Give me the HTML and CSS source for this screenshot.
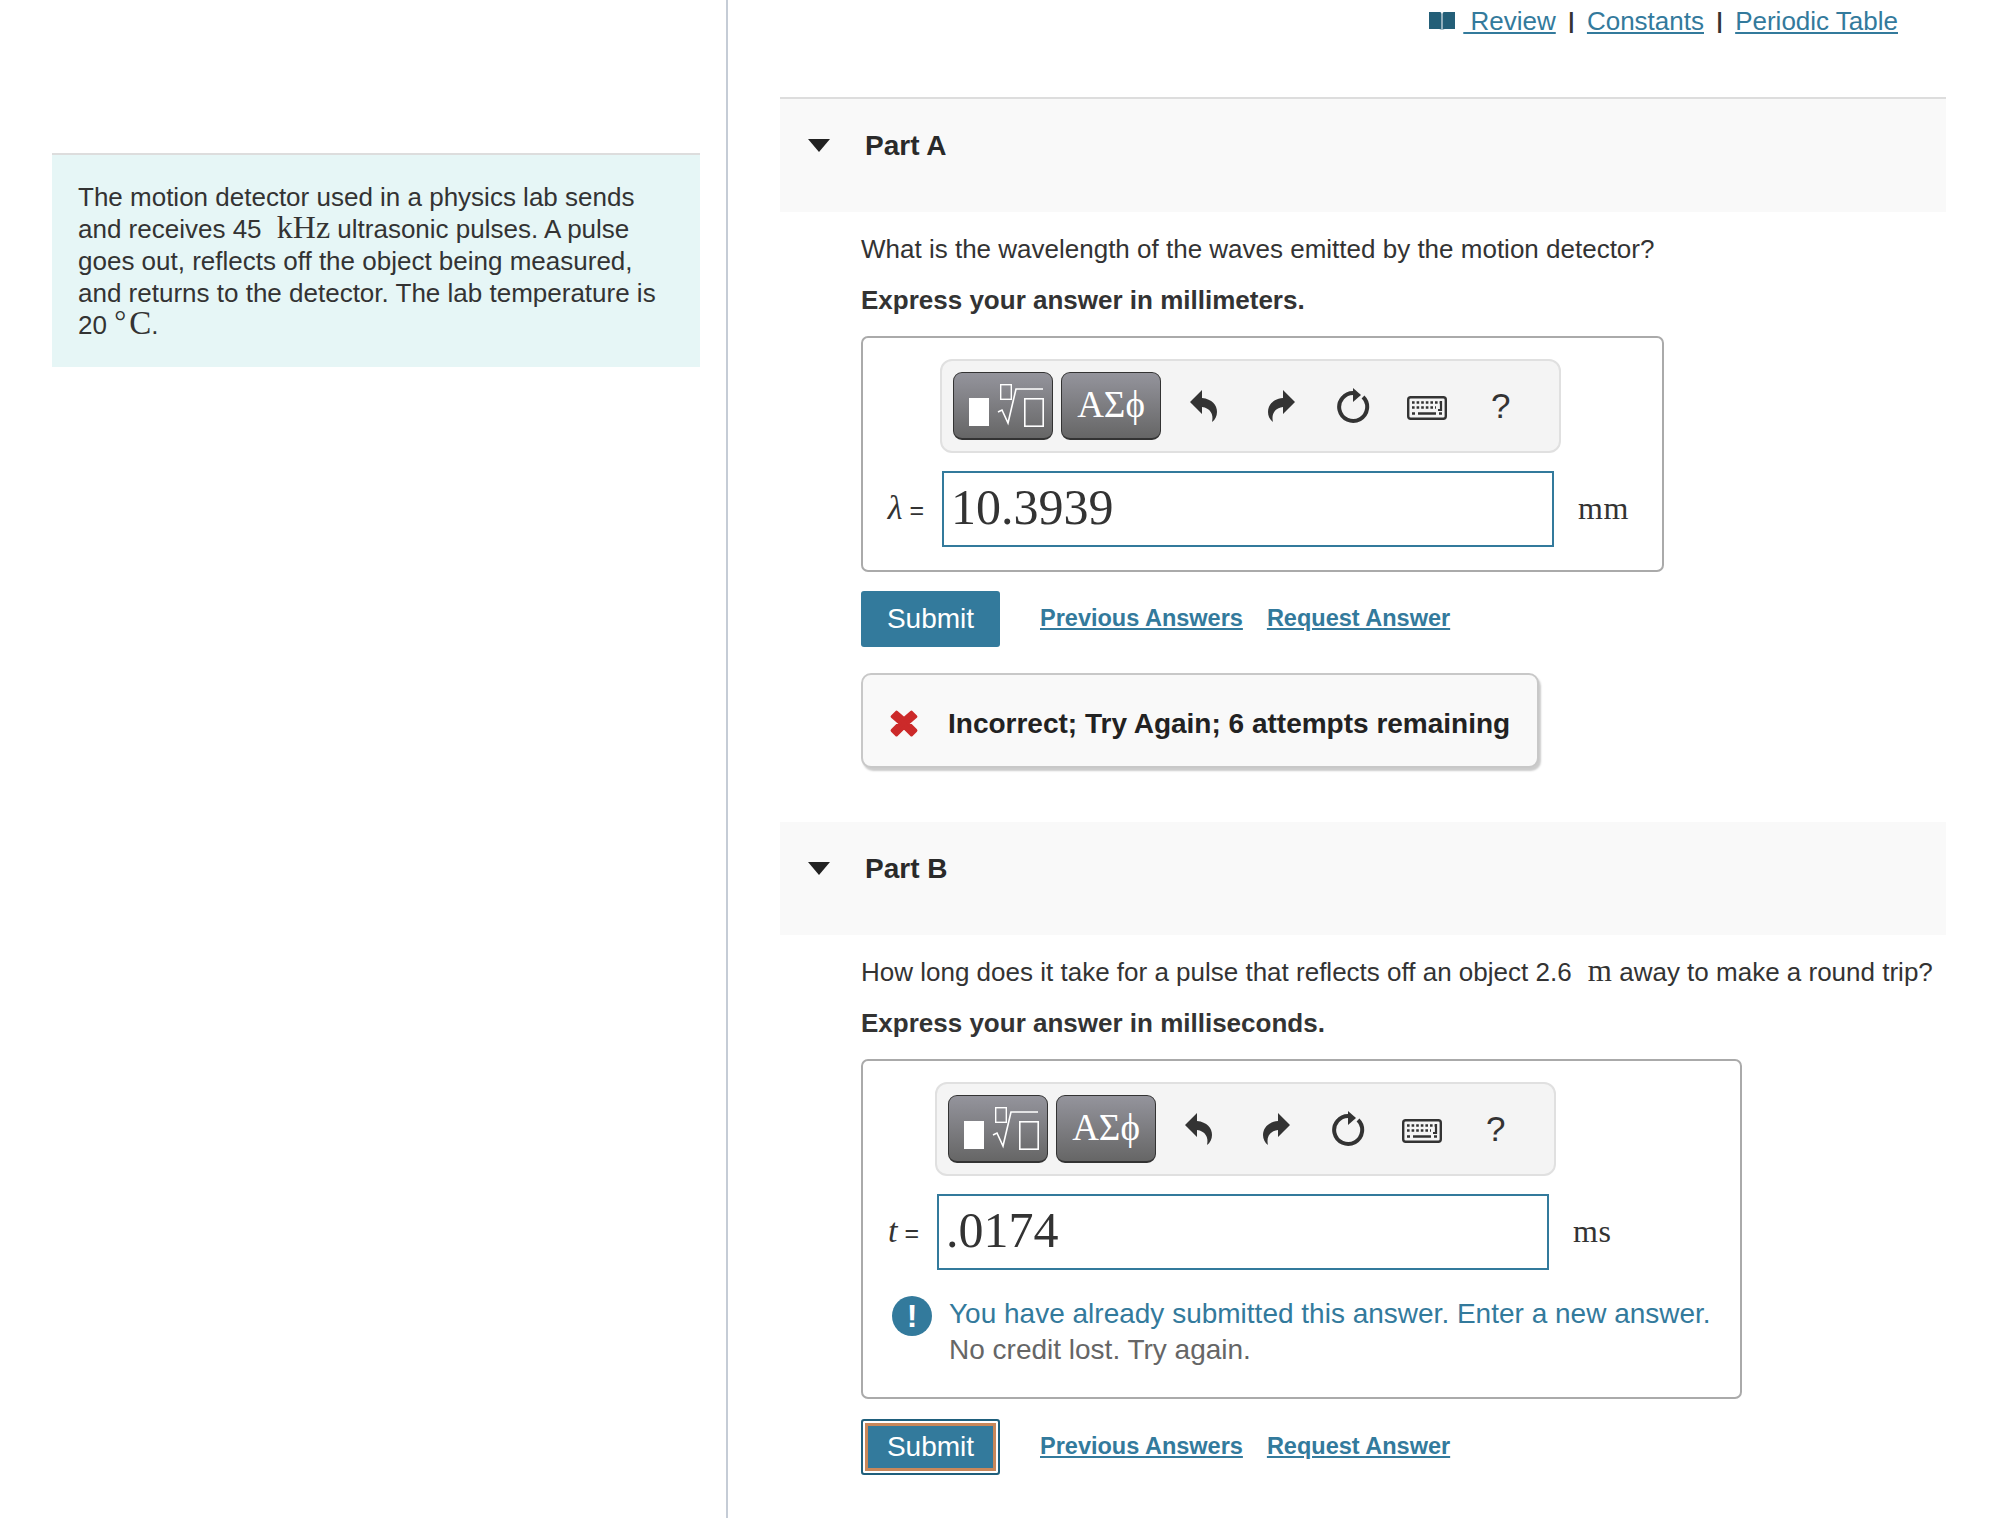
FILE: index.html
```html
<!DOCTYPE html>
<html lang="en">
<head>
  <meta charset="UTF-8" />
  <title>Motion detector problem</title>
  <link rel="stylesheet" href="styles.css">
</head>
<body>

  <svg class="defs" width="0" height="0">
    <symbol id="i-undo" viewBox="0 0 28 32"><path d="M0 12 L12 0 V8 C22 9 27 15 27 22 C27 26 25 30 22 32 C24 24 20 18 12 17 V24 Z"/></symbol>
    <symbol id="i-redo" viewBox="0 0 28 32"><path d="M28 12 L16 0 V8 C6 9 1 15 1 22 C1 26 3 30 6 32 C4 24 8 18 16 17 V24 Z"/></symbol>
    <symbol id="i-reset" viewBox="0 0 34 38">
      <path d="M18 6 A14 14 0 1 0 27 10" fill="none" stroke="#333" stroke-width="4"/>
      <path d="M17 1 L25 8 L17 15 Z"/>
    </symbol>
    <symbol id="i-keys" viewBox="0 0 40 24">
      <rect x="1.2" y="1.2" width="37.6" height="21.6" rx="2.5" fill="none" stroke="#333" stroke-width="2.4"/>
      <path d="M5 6.5h28M5 11.5h24" stroke="#333" stroke-width="2.6" stroke-dasharray="2.6 2"/>
      <path d="M5 17.5h3M11 17.5h18M32 17.5h3" stroke="#333" stroke-width="2.6"/>
      <path d="M34 5v9h-3" fill="none" stroke="#333" stroke-width="2.2"/>
    </symbol>
    <symbol id="i-template" viewBox="0 0 98 65">
      <rect x="15" y="25" width="20" height="28" fill="#fff"/>
      <rect x="46.7" y="11.7" width="10.6" height="14.6" fill="none" stroke="#fff" stroke-width="1.4"/>
      <path d="M44 39 L48 37 L54 50 L62 16 H89" fill="none" stroke="#fff" stroke-width="1.6"/>
      <rect x="70.8" y="25.8" width="18.4" height="27.4" fill="none" stroke="#fff" stroke-width="1.6"/>
    </symbol>
  </svg>

  <div class="left-col">
    <div class="intro">
      The motion detector used in a physics lab sends and receives 45 <span class="math kHz">kHz</span> ultrasonic pulses. A pulse goes out, reflects off the object being measured, and returns to the detector. The lab temperature is 20 <span class="math deg">&deg;</span><span class="math celsius">C</span>.
    </div>
  </div>

  <div class="right-col">
    <div class="top-links">
      <svg class="book" viewBox="0 0 26 20"><path d="M0 1 H11 Q12.5 1 12.5 3 V19 Q12 18 10 18 H0 Z M26 1 H15 Q13.5 1 13.5 3 V19 Q14 18 16 18 H26 Z"/></svg>
      <a class="review" href="#">&nbsp;Review</a>
      <span class="sep">|</span>
      <a href="#">Constants</a>
      <span class="sep">|</span>
      <a href="#">Periodic Table</a>
    </div>

    <div class="part-head first">
      <span class="caret"></span>
      <span class="part-title">Part A</span>
    </div>
    <div class="part-body">
      <p class="question">What is the wavelength of the waves emitted by the motion detector?</p>
      <p class="express">Express your answer in millimeters.</p>

      <div class="answer-box box-a">
        <div class="toolbar">
          <button class="tool-btn"><svg class="tpl"><use href="#i-template"/></svg></button>
          <button class="tool-btn greek">&Alpha;&Sigma;&#981;</button>
          <svg class="ico undo"><use href="#i-undo"/></svg>
          <svg class="ico redo"><use href="#i-redo"/></svg>
          <svg class="ico reset"><use href="#i-reset"/></svg>
          <svg class="ico keys"><use href="#i-keys"/></svg>
          <span class="help">?</span>
        </div>
        <div class="answer-row">
          <span class="var"><i>&lambda;</i> =</span>
          <div class="answer-input">10.3939</div>
          <span class="unit">mm</span>
        </div>
      </div>

      <div class="actions">
        <button class="submit">Submit</button>
        <a href="#">Previous Answers</a>
        <a href="#">Request Answer</a>
      </div>

      <div class="feedback">
        <svg class="x-mark" viewBox="0 0 28 28"><path d="M7 4 L14 10 L21 4 L25 8 L18 14 L25 21 L21 25 L14 18 L7 25 L3 21 L10 14 L3 8 Z" stroke="#cc2a2a" stroke-width="3" stroke-linejoin="round" fill="#cc2a2a"/></svg>
        <span class="feedback-text">Incorrect; Try Again; 6 attempts remaining</span>
      </div>
    </div>

    <div class="part-head">
      <span class="caret"></span>
      <span class="part-title">Part B</span>
    </div>
    <div class="part-body">
      <p class="question">How long does it take for a pulse that reflects off an object 2.6 <span class="math m">m</span> away to make a round trip?</p>
      <p class="express">Express your answer in milliseconds.</p>

      <div class="answer-box box-b">
        <div class="toolbar">
          <button class="tool-btn"><svg class="tpl"><use href="#i-template"/></svg></button>
          <button class="tool-btn greek">&Alpha;&Sigma;&#981;</button>
          <svg class="ico undo"><use href="#i-undo"/></svg>
          <svg class="ico redo"><use href="#i-redo"/></svg>
          <svg class="ico reset"><use href="#i-reset"/></svg>
          <svg class="ico keys"><use href="#i-keys"/></svg>
          <span class="help">?</span>
        </div>
        <div class="answer-row">
          <span class="var"><i>t</i> =</span>
          <div class="answer-input">.0174</div>
          <span class="unit">ms</span>
        </div>
        <div class="notice">
          <span class="notice-icon">!</span>
          <div>
            <div class="notice-main">You have already submitted this answer. Enter a new answer.</div>
            <div class="notice-sub">No credit lost. Try again.</div>
          </div>
        </div>
      </div>

      <div class="actions">
        <button class="submit focused">Submit</button>
        <a href="#">Previous Answers</a>
        <a href="#">Request Answer</a>
      </div>
    </div>
  </div>

</body>
</html>
```

FILE: styles.css
```css
:root {
  --teal: #337a9c;
  --text: #333;
}

* {
  box-sizing: border-box;
}

body {
  margin: 0;
  height: 1518px;
  overflow: hidden;
  display: flex;
  background: #fff;
  color: var(--text);
  font-family: "Liberation Sans", Arial, sans-serif;
  font-size: 26px;
}

.defs {
  position: absolute;
}

.left-col {
  width: 728px;
  flex: none;
  border-right: 2px solid #c5ccd6;
  padding: 153px 0 0 52px;
}

.intro {
  width: 648px;
  height: 214px;
  background: #e6f6f6;
  border-top: 2px solid #ddd;
  padding: 26px 26px 0;
  line-height: 32px;
}

.math {
  display: inline-block;
  font-family: "Liberation Serif", serif;
  line-height: 24px;
}

.kHz {
  font-size: 32px;
  margin-left: 8px;
}

.deg {
  font-size: 30px;
  position: relative;
  top: -3px;
}

.celsius {
  font-size: 33px;
  margin-left: 3px;
}

.m {
  font-size: 31px;
  margin-left: 9px;
}

.right-col {
  width: 1166px;
  margin-left: 52px;
  flex: none;
}

.top-links {
  height: 97px;
  padding: 6px 48px 0 0;
  display: flex;
  justify-content: flex-end;
  align-items: flex-start;
  line-height: 30px;
}

.top-links a {
  color: var(--teal);
}

.book {
  width: 26px;
  height: 20px;
  margin: 5px 8px 0 0;
  fill: #245f78;
}

.sep {
  margin: 0 12.5px;
  font-size: 22px;
  font-weight: bold;
}

.part-head {
  height: 113px;
  background: #f9f9f9;
  display: flex;
  align-items: flex-start;
  padding: 30px 0 0 28px;
}

.part-head.first {
  height: 115px;
  border-top: 2px solid #ddd;
}

.caret {
  width: 0;
  height: 0;
  margin-top: 10px;
  border-left: 11px solid transparent;
  border-right: 11px solid transparent;
  border-top: 13px solid #222;
}

.part-title {
  margin-left: 35px;
  font-size: 28px;
  font-weight: bold;
  line-height: 34px;
  color: #2a2a2a;
}

.part-body {
  padding-left: 81px;
}

.question {
  margin: 0;
  padding-top: 21px;
  line-height: 32px;
  white-space: nowrap;
}

.express {
  margin: 19px 0 0;
  line-height: 32px;
  font-weight: bold;
}

.answer-box {
  margin-top: 20px;
  border: 2px solid #aaa;
  border-radius: 7px;
}

.box-a {
  width: 803px;
  height: 236px;
  padding: 21px 0 0 77px;
}

.box-b {
  width: 881px;
  height: 340px;
  padding: 21px 0 0 72px;
}

.box-a + .actions {
  margin-top: 19px;
}

.toolbar {
  width: 621px;
  height: 94px;
  background: #f4f4f4;
  border: 2px solid #e0e0e0;
  border-radius: 12px;
  display: flex;
  align-items: center;
  padding: 0 0 0 11px;
}

.tool-btn {
  width: 100px;
  height: 68px;
  margin-right: 8px;
  padding: 0;
  border: 1px solid #333;
  border-bottom-width: 2px;
  border-radius: 9px;
  background: linear-gradient(#94949c, #666);
  color: #fff;
  display: flex;
  align-items: center;
  justify-content: center;
}

.greek {
  font-family: "Liberation Serif", serif;
  font-size: 37px;
  padding-bottom: 3px;
}

.tpl {
  width: 98px;
  height: 65px;
}

.ico {
  fill: #333;
}

.undo {
  width: 28px;
  height: 32px;
  margin-left: 21px;
}

.redo {
  width: 28px;
  height: 32px;
  margin-left: 49px;
}

.reset {
  width: 34px;
  height: 38px;
  margin-left: 41px;
}

.keys {
  width: 40px;
  height: 24px;
  margin-left: 37px;
  margin-top: 4px;
}

.help {
  margin-left: 44px;
  font-size: 35px;
  line-height: 1;
  margin-bottom: 2px;
}

.answer-row {
  display: flex;
  align-items: center;
  margin: 18px 0 0 2px;
}

.var {
  width: 70px;
  margin-left: -70px;
  padding: 0 18px 2px 0;
  text-align: right;
  white-space: nowrap;
  font-size: 25px;
}

.var i {
  font-family: "Liberation Serif", serif;
  font-size: 34px;
}

.answer-input {
  width: 612px;
  height: 76px;
  border: 2px solid var(--teal);
  background: #fff;
  font-family: "Liberation Serif", serif;
  font-size: 50px;
  line-height: 68px;
  padding-left: 7px;
}

.unit {
  margin-left: 24px;
  padding-bottom: 2px;
  font-family: "Liberation Serif", serif;
  font-size: 32px;
  letter-spacing: 0.5px;
}

.notice {
  display: flex;
  margin: 26px 0 0 -43px;
  gap: 17px;
  line-height: 36px;
}

.notice-icon {
  width: 40px;
  height: 40px;
  flex: none;
  border-radius: 50%;
  background: var(--teal);
  color: #fff;
  font-weight: bold;
  font-size: 32px;
  line-height: 40px;
  text-align: center;
}

.notice-main {
  color: var(--teal);
  font-size: 28px;
  white-space: nowrap;
}

.notice-sub {
  color: #666;
  font-size: 28px;
}

.actions {
  margin-top: 20px;
  display: flex;
  align-items: center;
}

.actions a {
  color: var(--teal);
  font-weight: bold;
  font-size: 23.5px;
  margin-left: 24px;
  position: relative;
  top: -1px;
}

.actions a:first-of-type {
  margin-left: 40px;
}

.submit {
  width: 139px;
  height: 56px;
  border: none;
  border-radius: 3px;
  background: var(--teal);
  color: #fff;
  font-family: "Liberation Sans", sans-serif;
  font-size: 28px;
}

.submit.focused {
  border: 2px solid #1f5f7c;
  box-shadow: inset 0 0 0 2px #fff, inset 0 0 0 5px #c8875a;
}

.feedback {
  margin: 26px 0 54px;
  width: 678px;
  height: 95px;
  background: #f9f9f9;
  border: 2px solid #c8c8c8;
  border-radius: 10px;
  box-shadow: 2px 3px 2px #ccc;
  display: flex;
  align-items: center;
  padding-left: 26px;
  font-weight: bold;
  color: #222;
}

.feedback-text {
  font-size: 28px;
  margin-top: 6px;
}

.x-mark {
  width: 30px;
  height: 30px;
  margin: 4px 29px 0 0;
  flex: none;
}
```
